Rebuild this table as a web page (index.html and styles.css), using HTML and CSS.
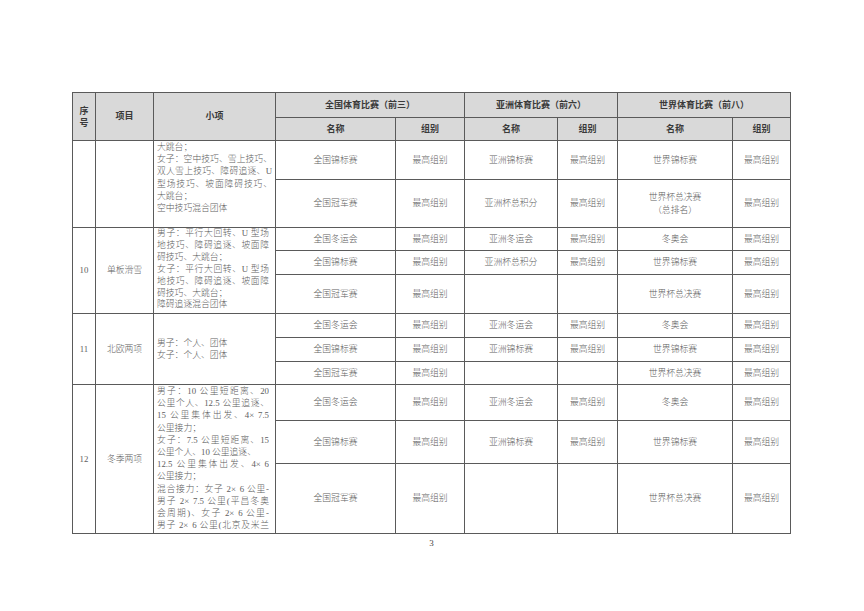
FILE: index.html
```html
<!DOCTYPE html>
<html lang="zh-CN">
<head>
<meta charset="utf-8">
<title>冬季项目赛事表</title>
<link rel="stylesheet" href="styles.css">
</head>
<body>
<div class="page">
  <table class="grid">
    <colgroup>
      <col class="c-seq"><col class="c-item"><col class="c-sub">
      <col class="c-n1"><col class="c-g1">
      <col class="c-n2"><col class="c-g2">
      <col class="c-n3"><col class="c-g3">
    </colgroup>
    <thead>
      <tr class="h-a">
        <th rowspan="2" class="seq">序<br>号</th>
        <th rowspan="2">项目</th>
        <th rowspan="2">小项</th>
        <th colspan="2">全国体育比赛（前三）</th>
        <th colspan="2">亚洲体育比赛（前六）</th>
        <th colspan="2">世界体育比赛（前八）</th>
      </tr>
      <tr class="h-b">
        <th>名称</th><th>组别</th>
        <th>名称</th><th>组别</th>
        <th>名称</th><th>组别</th>
      </tr>
    </thead>
    <tbody>
      <tr class="r39">
        <td rowspan="2"></td>
        <td rowspan="2"></td>
        <td rowspan="2" class="sub top">
          <span class="ln">大跳台；</span>
          <span class="ln j">女子：空中技巧、雪上技巧、</span>
          <span class="ln j">双人雪上技巧、障碍追逐、U</span>
          <span class="ln j">型场技巧、坡面障碍技巧、</span>
          <span class="ln">大跳台；</span>
          <span class="ln">空中技巧混合团体</span>
        </td>
        <td>全国锦标赛</td><td>最高组别</td>
        <td>亚洲锦标赛</td><td>最高组别</td>
        <td>世界锦标赛</td><td>最高组别</td>
      </tr>
      <tr class="r48">
        <td>全国冠军赛</td><td>最高组别</td>
        <td>亚洲杯总积分</td><td>最高组别</td>
        <td>世界杯总决赛<br>（总排名）</td><td>最高组别</td>
      </tr>

      <tr class="r23">
        <td rowspan="3">10</td>
        <td rowspan="3">单板滑雪</td>
        <td rowspan="3" class="sub top tight narrow">
          <span class="ln j">男子：平行大回转、U 型场</span>
          <span class="ln j">地技巧、障碍追逐、坡面障</span>
          <span class="ln">碍技巧、大跳台；</span>
          <span class="ln j">女子：平行大回转、U 型场</span>
          <span class="ln j">地技巧、障碍追逐、坡面障</span>
          <span class="ln">碍技巧、大跳台；</span>
          <span class="ln">障碍追逐混合团体</span>
        </td>
        <td>全国冬运会</td><td>最高组别</td>
        <td>亚洲冬运会</td><td>最高组别</td>
        <td>冬奥会</td><td>最高组别</td>
      </tr>
      <tr class="r24">
        <td>全国锦标赛</td><td>最高组别</td>
        <td>亚洲杯总积分</td><td>最高组别</td>
        <td>世界锦标赛</td><td>最高组别</td>
      </tr>
      <tr class="r39">
        <td>全国冠军赛</td><td>最高组别</td>
        <td></td><td></td>
        <td>世界杯总决赛</td><td>最高组别</td>
      </tr>

      <tr class="r24">
        <td rowspan="3">11</td>
        <td rowspan="3">北欧两项</td>
        <td rowspan="3" class="sub">
          <span class="ln">男子：个人、团体</span>
          <span class="ln">女子：个人、团体</span>
        </td>
        <td>全国冬运会</td><td>最高组别</td>
        <td>亚洲冬运会</td><td>最高组别</td>
        <td>冬奥会</td><td>最高组别</td>
      </tr>
      <tr class="r24">
        <td>全国锦标赛</td><td>最高组别</td>
        <td>亚洲锦标赛</td><td>最高组别</td>
        <td>世界锦标赛</td><td>最高组别</td>
      </tr>
      <tr class="r23">
        <td>全国冠军赛</td><td>最高组别</td>
        <td></td><td></td>
        <td>世界杯总决赛</td><td>最高组别</td>
      </tr>

      <tr class="r36">
        <td rowspan="3">12</td>
        <td rowspan="3">冬季两项</td>
        <td rowspan="3" class="sub top narrow">
          <div class="clipbox">
            <span class="ln j">男子：10 公里短距离、20</span>
            <span class="ln j">公里个人、12.5 公里追逐、</span>
            <span class="ln j">15 公里集体出发、4<span class="x">×</span>7.5</span>
            <span class="ln">公里接力；</span>
            <span class="ln j">女子：7.5 公里短距离、15</span>
            <span class="ln">公里个人、10 公里追逐、</span>
            <span class="ln j">12.5 公里集体出发、4<span class="x">×</span>6</span>
            <span class="ln">公里接力；</span>
            <span class="ln j">混合接力：女子 2<span class="x">×</span>6 公里-</span>
            <span class="ln j">男子 2<span class="x">×</span>7.5 公里(平昌冬奥</span>
            <span class="ln j">会周期)、女子 2<span class="x">×</span>6 公里-</span>
            <span class="ln j">男子 2<span class="x">×</span>6 公里(北京及米兰</span>
          </div>
        </td>
        <td>全国冬运会</td><td>最高组别</td>
        <td>亚洲冬运会</td><td>最高组别</td>
        <td>冬奥会</td><td>最高组别</td>
      </tr>
      <tr class="r43">
        <td>全国锦标赛</td><td>最高组别</td>
        <td>亚洲锦标赛</td><td>最高组别</td>
        <td>世界锦标赛</td><td>最高组别</td>
      </tr>
      <tr class="r70">
        <td>全国冠军赛</td><td>最高组别</td>
        <td></td><td></td>
        <td>世界杯总决赛</td><td>最高组别</td>
      </tr>
    </tbody>
  </table>
  <div class="pageno">3</div>
</div>
</body>
</html>
```

FILE: styles.css
```css
html, body {
  margin: 0;
  padding: 0;
  background: #ffffff;
}

.page {
  padding: 92px 0 0 72px;
  width: 719px;
}

.grid {
  border-collapse: collapse;
  table-layout: fixed;
  width: 719px;
  font-family: "Liberation Serif", "Noto Sans CJK SC", serif;
  font-size: 8.8px;
  font-weight: 300;
  color: #606060;
}

.c-seq { width: 23px; }
.c-item { width: 58px; }
.c-sub { width: 122px; }
.c-n1 { width: 120px; }
.c-g1 { width: 69px; }
.c-n2 { width: 93px; }
.c-g2 { width: 60px; }
.c-n3 { width: 115px; }
.c-g3 { width: 58px; }

.grid th,
.grid td {
  border: 1px solid #5a5a5a;
  padding: 0;
  text-align: center;
  vertical-align: middle;
  line-height: 12.2px;
  white-space: nowrap;
  overflow: hidden;
}

.grid th {
  background: #d9d9d9;
  font-family: "Noto Sans CJK SC", sans-serif;
  font-weight: 700;
  font-size: 9px;
  color: #3a3a3a;
}

.grid th.seq {
  line-height: 12px;
}

.h-a { height: 25px; }
.h-b { height: 23px; }
.r23 { height: 23px; }
.r24 { height: 24px; }
.r36 { height: 36px; }
.r39 { height: 39px; }
.r43 { height: 43px; }
.r48 { height: 48px; }
.r70 { height: 70px; }

.grid td.sub {
  text-align: left;
  padding: 0 3px;
}

.grid td.narrow {
  padding-right: 6px;
}

.grid td.top {
  vertical-align: top;
}

.grid td.tight {
  line-height: 11.9px;
}

.ln {
  display: block;
  white-space: nowrap;
}

.ln.j {
  text-align: justify;
  text-align-last: justify;
}

.x {
  display: inline-block;
  width: 1em;
  text-align: center;
}

.clipbox {
  height: 147px;
  overflow: hidden;
}

.pageno {
  width: 719px;
  text-align: center;
  margin-top: 4px;
  font-family: "Liberation Serif", serif;
  font-size: 9px;
  color: #444;
}
```
